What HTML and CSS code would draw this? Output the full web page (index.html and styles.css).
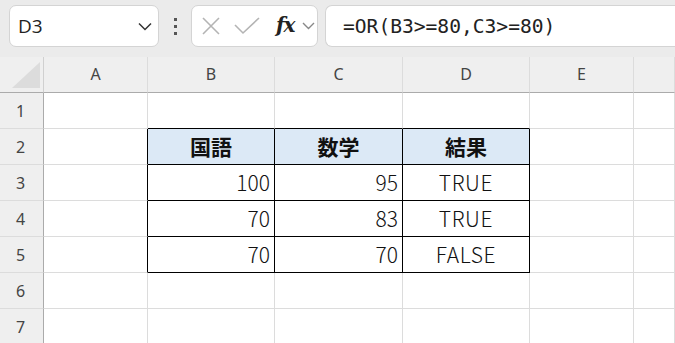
FILE: index.html
```html
<!DOCTYPE html>
<html lang="ja">
<head>
<meta charset="utf-8">
<title>OR関数</title>
<link rel="stylesheet" href="styles.css">
</head>
<body>
<div class="toolbar">
  <div class="namebox">
    <span class="cellref">D3</span>
    <svg class="chev" width="14" height="9" viewBox="0 0 14 9"><path d="M1 1.5 L7 7.5 L13 1.5" fill="none" stroke="#333" stroke-width="1.5"/></svg>
  </div>
  <div class="grip"><i></i><i></i><i></i></div>
  <div class="fxbox">
    <svg width="20" height="20" viewBox="0 0 20 20"><path d="M2 2 L18 18 M18 2 L2 18" stroke="#b4b4b4" stroke-width="1.6" fill="none"/></svg>
    <svg width="26" height="18" viewBox="0 0 26 18"><path d="M1 8 L9 16 L25 1" stroke="#b4b4b4" stroke-width="1.6" fill="none"/></svg>
    <span class="fx">fx</span>
    <svg class="chev-s" width="13" height="8" viewBox="0 0 13 8"><path d="M1 1 L6.5 6.5 L12 1" fill="none" stroke="#888" stroke-width="1.4"/></svg>
  </div>
  <div class="formula">=OR(B3&gt;=80,C3&gt;=80)</div>
</div>

<div class="sheet">
  <div class="corner"><span class="tri"></span></div>
  <div class="colhead">A</div>
  <div class="colhead">B</div>
  <div class="colhead">C</div>
  <div class="colhead">D</div>
  <div class="colhead">E</div>
  <div class="colhead"></div>

  <div class="rowhead">1</div>
  <div class="cell"></div>
  <div class="cell above"></div>
  <div class="cell above"></div>
  <div class="cell above"></div>
  <div class="cell"></div>
  <div class="cell"></div>

  <div class="rowhead">2</div>
  <div class="cell before"></div>
  <div class="cell t th">国語</div>
  <div class="cell t th">数学</div>
  <div class="cell t th">結果</div>
  <div class="cell"></div>
  <div class="cell"></div>

  <div class="rowhead">3</div>
  <div class="cell before"></div>
  <div class="cell t num">100</div>
  <div class="cell t num">95</div>
  <div class="cell t mid">TRUE</div>
  <div class="cell"></div>
  <div class="cell"></div>

  <div class="rowhead">4</div>
  <div class="cell before"></div>
  <div class="cell t num">70</div>
  <div class="cell t num">83</div>
  <div class="cell t mid">TRUE</div>
  <div class="cell"></div>
  <div class="cell"></div>

  <div class="rowhead">5</div>
  <div class="cell before"></div>
  <div class="cell t num">70</div>
  <div class="cell t num">70</div>
  <div class="cell t mid">FALSE</div>
  <div class="cell"></div>
  <div class="cell"></div>

  <div class="rowhead">6</div>
  <div class="cell"></div>
  <div class="cell"></div>
  <div class="cell"></div>
  <div class="cell"></div>
  <div class="cell"></div>
  <div class="cell"></div>

  <div class="rowhead">7</div>
  <div class="cell"></div>
  <div class="cell"></div>
  <div class="cell"></div>
  <div class="cell"></div>
  <div class="cell"></div>
  <div class="cell"></div>
</div>
</body>
</html>
```

FILE: styles.css
```css
* { box-sizing: border-box; }

html, body {
  margin: 0;
  padding: 0;
  background: #ffffff;
  overflow: hidden;
  font-family: "Noto Sans", "Noto Sans CJK JP", sans-serif;
}

/* formula bar */
.toolbar {
  height: 57px;
  background: #ebebeb;
  display: flex;
  align-items: flex-start;
  padding: 5px 0 0 9px;
}

.namebox,
.fxbox,
.formula {
  height: 42px;
  background: #ffffff;
  border: 1px solid #d4d4d4;
  border-radius: 7px;
  display: flex;
  align-items: center;
}

.namebox {
  width: 150px;
  padding: 0 6px 0 8px;
  justify-content: space-between;
}

.cellref {
  font-family: "Open Sans", "Noto Sans", sans-serif;
  font-size: 19px;
  color: #222;
}

.chev { margin-top: 1px; }

.grip {
  width: 32px;
  display: flex;
  flex-direction: column;
  align-items: center;
  gap: 4px;
  padding-top: 13px;
}
.grip i {
  display: block;
  width: 3px;
  height: 3px;
  background: #555;
}

.fxbox {
  width: 127px;
  padding: 0 0 0 9px;
}
.fxbox svg:nth-child(1) { margin-right: 13px; }
.fxbox svg:nth-child(2) { margin-right: 16px; }

.fx {
  font-family: "DejaVu Serif", "Liberation Serif", serif;
  font-style: italic;
  font-weight: bold;
  font-size: 20px;
  color: #222;
  letter-spacing: -1px;
  margin-right: 7px;
  margin-top: -3px;
}

.formula {
  margin-left: 7px;
  flex: 1;
  border-right: none;
  border-radius: 7px 0 0 7px;
  padding-left: 17px;
  font-family: "DejaVu Sans Mono", "Liberation Mono", monospace;
  font-size: 19.6px;
  color: #222;
}

/* grid of cells */
.sheet {
  display: grid;
  grid-template-columns: 44px 104px 127px 128px 127px 104px 1fr;
  grid-template-rows: repeat(8, 36px);
}

.corner {
  background: #efefef;
  border-right: 1px solid #d0d0d0;
  border-bottom: 1px solid #ababab;
  position: relative;
}
.corner .tri {
  position: absolute;
  left: 12px;
  top: 5px;
  width: 0;
  height: 0;
  border-left: 28px solid transparent;
  border-bottom: 26px solid #dcdcdc;
}

.colhead {
  background: #efefef;
  border-right: 1px solid #dcdcdc;
  border-bottom: 1px solid #ababab;
  display: flex;
  align-items: center;
  justify-content: center;
  font-size: 16px;
  color: #444;
  padding-bottom: 2px;
}

.rowhead {
  background: #efefef;
  border-right: 1px solid #ababab;
  border-bottom: 1px solid #dcdcdc;
  display: flex;
  align-items: center;
  justify-content: center;
  font-size: 16px;
  color: #444;
  padding-right: 2px;
}

.cell {
  border-right: 1px solid #dcdcdc;
  border-bottom: 1px solid #dcdcdc;
  display: flex;
  align-items: center;
  padding-bottom: 2px;
  font-family: "Noto Sans CJK JP", sans-serif;
  font-size: 21px;
  color: #111;
}

.cell.above { border-bottom-color: #000; }
.cell.before { border-right-color: #000; }

.cell.t {
  border-right-color: #000;
  border-bottom-color: #000;
}

.th {
  background: #dce9f6;
  justify-content: center;
  font-weight: bold;
}

.num {
  justify-content: flex-end;
  padding-right: 4px;
  font-weight: 300;
}

.mid {
  justify-content: center;
  font-weight: 300;
  letter-spacing: 0.6px;
}
```
